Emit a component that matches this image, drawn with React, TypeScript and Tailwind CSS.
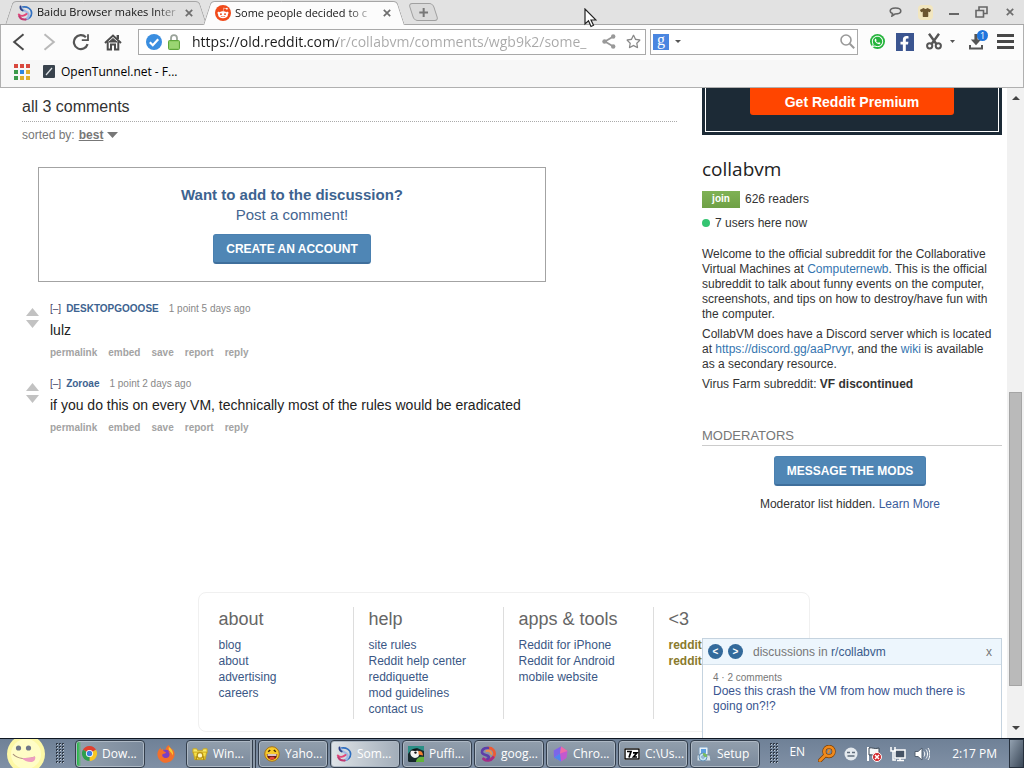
import React from "react";
import { FaRedditAlien, FaFacebookF, FaWhatsapp, FaTshirt, FaRegStar, FaFirefoxBrowser } from "react-icons/fa";

/* ---------- icons ---------- */

function BaiduIcon({ size = 16 }: { size?: number }) {
  return (
    <svg width={size} height={size} viewBox="0 0 16 16" fill="none" strokeLinecap="round" aria-hidden="true">
      <path d="M5.500 2C10 1 14.600 4 14.600 8c0 3.400-2.600 6-6 6.400" stroke="#2f6fc0" strokeWidth="1.700" />
      <path d="M4.500 3c1.800 4 6 2.600 7 6 .6 2.200-.4 4-2.500 5" stroke="#9db9e4" strokeWidth="2.200" />
      <path d="M1.800 9.500c2.200 2.300 5.700 1.200 7.700-.5" stroke="#e2487a" strokeWidth="2" />
      <path d="M2.200 11.200c1.500 2.800 4 3.600 6.600 3.200" stroke="#c23a72" strokeWidth="2" />
      <path d="M3.500 1.500c-.3 1.800.5 3.300 2.200 4" stroke="#2a3f86" strokeWidth="1.800" />
    </svg>
  );
}

function RedditIcon() {
  return (
    <span className="flex size-4 shrink-0 items-center justify-center rounded-full bg-[#f04a1a]">
      <FaRedditAlien size={12} color="#fff" />
    </span>
  );
}

function CloseX({ size = 8 }: { size?: number }) {
  return (
    <svg width={size} height={size} viewBox="0 0 8 8" aria-hidden="true">
      <path d="m.8.8 6.4 6.4M7.2.8.8 7.2" stroke="#6e6e6e" strokeWidth="1.7" />
    </svg>
  );
}

function BackIcon({ flip = false }: { flip?: boolean }) {
  return (
    <svg width="14" height="18" viewBox="0 0 14 18" fill="none" className={flip ? "rotate-180" : ""} aria-hidden="true">
      <path d="M11.5 1.2 2.2 9l9.3 7.8" stroke={flip ? "#b9b9b9" : "#4a4a4a"} strokeWidth="2" />
    </svg>
  );
}

function ReloadIcon() {
  return (
    <svg width="18" height="18" viewBox="0 0 18 18" fill="none" aria-hidden="true">
      <path d="M15.6 11.2A7 7 0 1 1 13.9 4.2" stroke="#555" strokeWidth="2.2" />
      <path d="M16 1.2v6H9.8" stroke="#555" strokeWidth="1.8" />
    </svg>
  );
}

function HomeIcon() {
  return (
    <svg width="18" height="18" viewBox="0 0 18 18" fill="none" stroke="#4d4d4d" aria-hidden="true">
      <path d="M1 10 9 2.500l8 7.500" strokeWidth="2" />
      <path d="M3.700 8.200v8.300H7v-5h4v5h3.300V8.200" strokeWidth="2" />
      <path d="M13.800 2v4" strokeWidth="2.400" />
      <path d="M5 9 9 5.500 13 9z" fill="#4d4d4d" strokeWidth="1" />
    </svg>
  );
}

function VerifiedIcon() {
  return (
    <svg width="16" height="16" viewBox="0 0 16 16" aria-hidden="true">
      <circle cx="8" cy="8" r="8" fill="#3a8ee0" />
      <path d="m3.8 8.2 3 3 5.4-6" fill="none" stroke="#fff" strokeWidth="2.2" />
    </svg>
  );
}

function LockIcon() {
  return (
    <svg width="12" height="16" viewBox="0 0 12 16" aria-hidden="true">
      <path d="M3 8V4.2a3 3 0 0 1 6 0V8" fill="none" stroke="#9aa39a" strokeWidth="1.8" />
      <rect x=".5" y="6.500" width="11" height="9" rx="1" fill="#8dcc63" stroke="#5fa63c" />
      <path d="M1.500 9h9M1.500 11h9M1.500 13h9" stroke="#a7de83" />
    </svg>
  );
}

function ShareIcon() {
  return (
    <svg width="14" height="15" viewBox="0 0 14 15" aria-hidden="true">
      <path d="M11.300 2.500 3 7.500l8.300 5" fill="none" stroke="#999" strokeWidth="1.800" />
      <circle cx="11.200" cy="2.500" r="2.200" fill="#999" />
      <circle cx="2.600" cy="7.500" r="2.300" fill="#999" />
      <circle cx="11.200" cy="12.500" r="2.200" fill="#999" />
    </svg>
  );
}

function ScissorsIcon() {
  return (
    <svg width="16" height="17" viewBox="0 0 16 17" fill="none" stroke="#555" aria-hidden="true">
      <path d="M3 .8 10.400 11M13 .8 5.600 11" strokeWidth="2.400" />
      <circle cx="3.700" cy="12.800" r="2.600" strokeWidth="2" />
      <circle cx="12.300" cy="12.800" r="2.600" strokeWidth="2" />
    </svg>
  );
}

function DownloadIcon() {
  return (
    <svg width="14" height="16" viewBox="0 0 14 16" aria-hidden="true">
      <path d="M7 0v8" stroke="#555" strokeWidth="3.200" />
      <path d="M1.800 5.500h10.400L7 11.200z" fill="#555" />
      <path d="M1 11v3.600h12V11" fill="none" stroke="#555" strokeWidth="2" />
    </svg>
  );
}

function Caret({ color = "#555", width = 6 }: { color?: string; width?: number }) {
  return (
    <svg width={width} height={Math.ceil(width / 2)} viewBox="0 0 6 3" preserveAspectRatio="none" aria-hidden="true">
      <path d="M0 0h6L3 3z" fill={color} />
    </svg>
  );
}

function AppsIcon() {
  const colors = ["#d8483e", "#d8483e", "#d8483e", "#3b9a4a", "#2f86e0", "#dfae2c", "#3b9a4a", "#dfae2c", "#dfae2c"];
  return (
    <svg width="16" height="16" viewBox="0 0 16 16" aria-hidden="true">
      {colors.map((c, i) => (
        <rect key={i} x={(i % 3) * 6} y={Math.floor(i / 3) * 6} width="4" height="4" fill={c} />
      ))}
    </svg>
  );
}

function ChromeIcon() {
  return (
    <svg width="15" height="15" viewBox="0 0 16 16" aria-hidden="true">
      <path d="M8 8 1.070 4A8 8 0 0 1 14.930 4z" fill="#e0402f" />
      <path d="M8 8 14.930 4A8 8 0 0 1 8 16z" fill="#f8c623" />
      <path d="M8 8v8A8 8 0 0 1 1.070 4z" fill="#2e9f4c" />
      <circle cx="8" cy="8" r="3.800" fill="#fff" />
      <circle cx="8" cy="8" r="2.900" fill="#3c7fe0" />
    </svg>
  );
}

function FolderIcon() {
  return (
    <svg width="17" height="15" viewBox="0 0 17 15" aria-hidden="true">
      <path d="M1 2.500h4l1 2h5l1-2h4V7H1z" fill="#f9ea6a" stroke="#c9a51d" />
      <path d="M1.500 6h14l-1.500 8H3z" fill="#f6e14a" stroke="#c9a51d" />
      <circle cx="8.500" cy="9.500" r="3" fill="#fff9c4" stroke="#b9920f" strokeWidth="1.400" />
      <path d="M4.500 14.500v-4M12.500 14.500v-4" stroke="#b08b12" strokeWidth="1.500" />
    </svg>
  );
}

function LaughIcon() {
  return (
    <svg width="16" height="16" viewBox="0 0 16 16" aria-hidden="true">
      <circle cx="8" cy="8" r="7.300" fill="#f7c92a" stroke="#a4721a" />
      <path d="M2.800 8h10.400c0 3.500-2.200 5.700-5.200 5.700S2.800 11.500 2.800 8z" fill="#6a1813" />
      <path d="M3.500 8.200h9v1.500h-9z" fill="#fff" />
      <path d="M5 12c2-1.600 4-1.600 6 0-1.500 2-4.500 2-6 0z" fill="#e8473c" />
      <path d="M4.200 5.800 6.200 4M11.800 5.800 9.800 4" stroke="#3b2706" strokeWidth="1.500" />
    </svg>
  );
}

function PuffinIcon() {
  return (
    <svg width="16" height="16" viewBox="0 0 16 16" aria-hidden="true">
      <rect width="16" height="16" rx="1.500" fill="#17282b" />
      <path d="M0 0h16v5L9 2 3 4 0 8z" fill="#2a8f86" />
      <path d="M8 16c0-4 4-6 8-5v5z" fill="#62b33b" />
      <path d="M3 5c3-3 7-2 8 1s-1 6-4 6-6-4-4-7z" fill="#f3f4f2" />
      <path d="M10.500 5c3-.5 4.500 1.500 4.500 4.500l-4.500-1z" fill="#ef7e31" />
      <path d="M3 4.500c2-2.500 6-2.500 7.500 0L7 5z" fill="#0d1416" />
      <circle cx="7.500" cy="6.600" r="1.200" fill="#111" />
    </svg>
  );
}

function SwirlIcon() {
  return (
    <svg width="16" height="16" viewBox="0 0 16 16" fill="none" strokeLinecap="round" aria-hidden="true">
      <path d="M8.500 2c4 0 6.500 3 6 6.500-.5 2.500-2 4-4 4.500" stroke="#ee5a34" strokeWidth="2.800" />
      <path d="M13 11.500c-2 3.200-6.500 3.800-9.500 1.300" stroke="#a62c86" strokeWidth="2.800" />
      <path d="M8 2C4 1.500 1.500 4 2 6.500 2.500 9 6 8.600 8 9.800c1.500 1 1 2.600-.5 3" stroke="#5d3fa8" strokeWidth="2.600" />
      <path d="M6.500 5c2.500-.5 4.500.7 5 3" stroke="#f08c4a" strokeWidth="2" />
    </svg>
  );
}

function GemIcon() {
  return (
    <svg width="15" height="16" viewBox="0 0 15 16" aria-hidden="true">
      <path d="M8 .5 14.500 5l-1 7L8 15.500 1 11.500.8 4.500z" fill="#c259cf" />
      <path d="M8 .5.8 4.500 1 11.500l6-4z" fill="#7b66e8" />
      <path d="m8 .5 6.500 4.500-7.500 2.500z" fill="#f06aa7" />
      <path d="M1 11.500 8 15.500l-1-8z" fill="#4e86ee" />
    </svg>
  );
}

function SevenZipIcon() {
  return (
    <svg width="16" height="12" viewBox="0 0 16 12" fill="none" aria-hidden="true">
      <rect width="16" height="12" fill="#fff" />
      <rect x="1" y="1" width="14" height="10" fill="#fff" stroke="#000" strokeWidth="1.400" />
      <path d="M3 3.500h4L5 9.500M9 4.800h4L9.500 9H13" stroke="#000" strokeWidth="1.700" />
    </svg>
  );
}

function SetupIcon() {
  return (
    <svg width="16" height="16" viewBox="0 0 16 16" aria-hidden="true">
      <rect x="3" y="1" width="9" height="8" rx="1" fill="#e8f1f8" stroke="#7f9cb8" />
      <rect x="5" y="3" width="5" height="4" fill="#5c9fe0" />
      <path d="M1 9h13l1 6H1z" fill="#d8e2ea" stroke="#7c8ea0" />
      <circle cx="7" cy="11" r="4" fill="#c2e2f2" stroke="#6793b8" />
      <path d="M7 11V7a4 4 0 0 1 4 4z" fill="#79bf5e" />
      <circle cx="7" cy="11" r="1.200" fill="#fff" stroke="#6793b8" />
    </svg>
  );
}

function StartFace() {
  return (
    <svg width="40" height="40" viewBox="0 0 40 40" aria-hidden="true">
      <circle cx="20" cy="20" r="19" fill="#fdf8a6" />
      <circle cx="20" cy="20" r="15" fill="#fffdc6" />
      <circle cx="12.500" cy="14" r="2.600" fill="#6f7789" />
      <circle cx="22.500" cy="14" r="2.600" fill="#6f7789" />
      <path d="M7 20c4 5 14 6 22 3" fill="none" stroke="#a88f7a" strokeWidth="1.200" />
      <path d="M16 24c4 0 9 0 13-1.500 1 3-1 5.500-4 5.500-4 0-7-1.500-9-4z" fill="#ee9dc0" />
    </svg>
  );
}

function Grip() {
  return (
    <svg width="9" height="22" viewBox="0 0 9 22" aria-hidden="true">
      {Array.from({ length: 21 }, (_, i) => (
        <g key={i}>
          <rect x={(i % 3) * 3} y={Math.floor(i / 3) * 3} width="2" height="2" fill="#2f3a48" />
          <rect x={(i % 3) * 3 + 1} y={Math.floor(i / 3) * 3 + 1} width="1" height="1" fill="#c3ccd6" />
        </g>
      ))}
    </svg>
  );
}

function Arrows() {
  return (
    <div className="flex w-3.5 shrink-0 flex-col gap-1 pt-2">
      <button aria-label="upvote">
        <svg width="13" height="8" viewBox="0 0 13 8" className="block"><path d="M0 8 6.500 0 13 8z" fill="#c2c2c2" /></svg>
      </button>
      <button aria-label="downvote">
        <svg width="13" height="8" viewBox="0 0 13 8" className="block"><path d="M0 0h13L6.500 8z" fill="#c2c2c2" /></svg>
      </button>
    </div>
  );
}

/* ---------- browser chrome ---------- */

function Tab({ active = false, icon, title }: { active?: boolean; icon: React.ReactNode; title: string }) {
  const fill = active ? "bg-[#fcfcfc]" : "bg-[#dfdfdf]";
  return (
    <div className={`relative mr-1 flex w-[194px] shrink-0 items-center ${active ? "-mb-px h-6" : "h-[23px]"}`}>
      <span className={`absolute inset-y-0 left-0 w-3/5 -skew-x-[18deg] rounded-tl border-t border-l border-[#a6a6a6] ${fill}`} />
      <span className={`absolute inset-y-0 right-0 w-3/5 skew-x-[18deg] rounded-tr border-t border-r border-[#a6a6a6] ${fill}`} />
      <div className="relative flex w-full items-center pr-2.5 pl-2">
        {icon}
        <span className="ml-1 bg-[linear-gradient(90deg,#111_84%,#aaa_100%)] bg-clip-text text-[11px] whitespace-nowrap text-transparent">
          {title}
        </span>
        <button aria-label="Close tab" className="ml-auto"><CloseX /></button>
      </div>
    </div>
  );
}

function TabStrip() {
  return (
    <header className="flex h-[25px] items-end border-b border-[#a6a6a6] bg-[#e2e2e2] pl-[9px]">
      <Tab icon={<BaiduIcon />} title="Baidu Browser makes Inter" />
      <Tab active icon={<RedditIcon />} title="Some people decided to c" />
      <button aria-label="New tab" className="mb-[3px] ml-1.5 flex h-[18px] w-[25px] skew-x-[18deg] items-center justify-center rounded-sm border border-[#a0a0a0] bg-[#dadada]">
        <svg width="9" height="9" viewBox="0 0 9 9" className="-skew-x-[18deg]"><path d="M4.500 0v9M0 4.500h9" stroke="#777" strokeWidth="2" /></svg>
      </button>
      <div className="ml-auto flex h-full items-center gap-4 pr-2.5">
        <button aria-label="Feedback">
          <svg width="13" height="10" viewBox="0 0 13 10" fill="none"><path d="M6.500 1C3 1 1.200 2.300 1.200 4c0 1.300 1 2.200 2.300 2.600L3 9l3-2c3.500 0 5.800-1 5.800-3S9.800 1 6.500 1z" stroke="#666" strokeWidth="1.600" /></svg>
        </button>
        <button aria-label="Skins" className="rounded-sm bg-[#f2e6bf] p-0.5"><FaTshirt size={11} color="#6b5530" /></button>
        <button aria-label="Minimize" className="pt-1"><span className="block h-0.5 w-2.5 bg-[#666]" /></button>
        <button aria-label="Restore">
          <svg width="13" height="12" viewBox="0 0 13 12" fill="none" stroke="#666" strokeWidth="1.600"><path d="M1 4.500h7.500V11H1zM4 4V1h8v6.500H9" /></svg>
        </button>
        <button aria-label="Close" className="pl-0.5"><CloseX size={8} /></button>
      </div>
    </header>
  );
}

function Toolbar() {
  return (
    <div className="flex h-[35px] items-center border-x border-[#b0b0b0] bg-[#fcfcfc] pr-[9px] pb-0.5 pl-[11px]">
      <nav className="flex w-[126px] shrink-0 items-center gap-4">
        <button aria-label="Back"><BackIcon /></button>
        <button aria-label="Forward"><BackIcon flip /></button>
        <button aria-label="Reload"><ReloadIcon /></button>
        <button aria-label="Home" className="-ml-0.5"><HomeIcon /></button>
      </nav>
      <div className="flex h-[26px] min-w-0 flex-1 items-center border border-[#a9a9a9] bg-white pr-1 pl-[7px]">
        <VerifiedIcon />
        <span className="ml-1.5"><LockIcon /></span>
        <input
          aria-label="Address"
          readOnly
          value="https://old.reddit.com/r/collabvm/comments/wgb9k2/some_"
          className="ml-3 min-w-0 flex-1 bg-[linear-gradient(90deg,#1a1a1a_146px,#a8a8a8_146px)] bg-clip-text text-sm text-transparent outline-none"
        />
        <button aria-label="Share" className="ml-1"><ShareIcon /></button>
        <button aria-label="Bookmark this page" className="ml-2.5"><FaRegStar size={15} color="#888" /></button>
      </div>
      <div className="ml-1 flex h-[26px] w-[208px] shrink-0 items-center border border-[#a9a9a9] bg-white px-0.5">
        <button aria-label="Search engine" className="flex items-center gap-1.5">
          <span className="flex size-4 items-center justify-center bg-[#4a86e0] pb-1 font-['Liberation_Serif',serif] text-base leading-4 text-white">g</span>
          <Caret />
        </button>
        <input aria-label="Search" className="min-w-0 flex-1 outline-none" />
        <svg width="15" height="15" viewBox="0 0 15 15" fill="none" stroke="#999" aria-hidden="true"><circle cx="6" cy="6" r="5" strokeWidth="1.600" /><path d="m9.800 9.800 4.400 4.400" strokeWidth="2" /></svg>
      </div>
      <div className="flex shrink-0 items-center pl-3">
        <button aria-label="WhatsApp" className="flex size-[15px] items-center justify-center rounded-full bg-[#25b43c]"><FaWhatsapp size={13} color="#fff" /></button>
        <button aria-label="Facebook" className="ml-[11px] flex size-[18px] items-end justify-end bg-[#3b5590] pr-0.5"><FaFacebookF size={15} color="#fff" /></button>
        <button aria-label="Clip" className="ml-3 flex items-center gap-2"><ScissorsIcon /><Caret width={5} /></button>
        <button aria-label="Downloads" className="relative ml-3.5">
          <DownloadIcon />
          <span className="absolute -top-1 left-2 flex size-[11px] items-center justify-center rounded-full bg-[#1f75dd] text-[9px] leading-none text-white">1</span>
        </button>
        <button aria-label="Menu" className="ml-3.5 flex flex-col gap-[3px]">
          <span className="h-[3px] w-[17px] bg-[#484848]" />
          <span className="h-[3px] w-[17px] bg-[#484848]" />
          <span className="h-[3px] w-[17px] bg-[#484848]" />
        </button>
      </div>
    </div>
  );
}

function BookmarkBar() {
  return (
    <div className="flex h-7 items-center gap-[13px] border-x border-b border-[#b0b0b0] bg-[#f7f7f7] pb-1 pl-[13px]">
      <button aria-label="Apps"><AppsIcon /></button>
      <a href="#opentunnel" className="flex items-center gap-1.5 text-xs text-black">
        <svg width="12" height="13" viewBox="0 0 12 13" aria-hidden="true"><rect width="12" height="13" rx="1" fill="#38424c" /><path d="m3 10 6-7" stroke="#e0e4e8" strokeWidth="1.200" /></svg>
        OpenTunnel.net - F...
      </a>
    </div>
  );
}

/* ---------- page ---------- */

const actions = ["permalink", "embed", "save", "report", "reply"];

function Comment({ author, age, text }: { author: string; age: string; text: string }) {
  return (
    <article className="flex gap-2.5 pl-1">
      <Arrows />
      <div className="h-[75px]">
        <p className="flex h-4 items-center text-[10px] text-[#888]">
          <button className="text-[#446]">[–]</button>
          <a href="#author" className="ml-[5px] font-bold text-[#3d6390]">{author}</a>
          <span className="ml-2.5">1 point {age}</span>
        </p>
        <p className="mt-1 text-sm leading-5 text-[#222]">{text}</p>
        <ul className="mt-[5px] flex gap-[11px] text-[10px] leading-4 font-bold text-[#a3a3a3]">
          {actions.map((a) => (
            <li key={a}><a href="#action">{a}</a></li>
          ))}
        </ul>
      </div>
    </article>
  );
}

function BlueButton({ children }: { children: React.ReactNode }) {
  return (
    <button className="h-[30px] rounded-[3px] border border-b-2 border-[#4a80b0] border-b-[#3f6f9c] bg-[#4f86b5] px-3 text-xs font-bold text-white">
      {children}
    </button>
  );
}

function Comments() {
  return (
    <main className="min-w-0 flex-1 pt-[9px] pl-[22px]">
      <h2 className="border-b border-dotted border-[#aaa] pb-1 text-base leading-5 text-[#333]">all 3 comments</h2>
      <div className="mt-[5px] flex h-4 items-center text-xs text-[#777]">
        sorted by:
        <button className="ml-1 flex items-center gap-1 font-bold"><span className="underline">best</span><Caret width={11} color="#777" /></button>
      </div>
      <section className="mt-6 ml-4 flex h-[115px] max-w-[508px] flex-col items-center border border-[#a3a3a3] pt-[17px] text-[15px] leading-5 text-[#446590]">
        <h3 className="font-bold text-[#3d6390]">Want to add to the discussion?</h3>
        <p className="mb-[9px]">Post a comment!</p>
        <BlueButton>CREATE AN ACCOUNT</BlueButton>
      </section>
      <div className="mt-[18px]">
        <Comment author="DESKTOPGOOOSE" age="5 days ago" text="lulz" />
        <Comment author="Zoroae" age="2 days ago" text="if you do this on every VM, technically most of the rules would be eradicated" />
      </div>
    </main>
  );
}

function Sidebar() {
  return (
    <aside className="w-[300px] shrink-0 text-xs text-[#333]">
      <div className="bg-[#1c2a36] px-[3px] pb-[3px]">
        <div className="flex h-11 justify-center border-x border-b border-white">
          <button className="h-[27px] w-[204px] rounded-b-[3px] bg-[#ff4500] text-sm font-bold text-white">Get Reddit Premium</button>
        </div>
      </div>
      <h1 className="mt-5 font-['Open_Sans','Noto_Sans',sans-serif] text-[19px] leading-7 text-[#222]">collabvm</h1>
      <p className="mt-2 flex h-4 items-center gap-[5px]">
        <button className="h-[17px] w-[38px] bg-gradient-to-b from-[#7fb255] to-[#6fa046] text-[10px] font-bold text-white">join</button>
        626 readers
      </p>
      <p className="mt-2 flex h-4 items-center gap-[5px]"><span className="size-2 rounded-full bg-[#34c471]" />7 users here now</p>
      <div className="mt-4 space-y-[5px] pr-2 leading-[15px]">
        <p>
          Welcome to the official subreddit for the Collaborative Virtual Machines at <a href="#computernewb" className="text-[#3475b0]">Computernewb</a>. This is the official
          subreddit to talk about funny events on the computer, screenshots, and tips on how to destroy/have fun with the computer.
        </p>
        <p>
          CollabVM does have a Discord server which is located at <a href="#discord" className="text-[#3475b0]">https://discord.gg/aaPrvyr</a>, and the{" "}
          <a href="#wiki" className="text-[#3475b0]">wiki</a> is available as a secondary resource.
        </p>
        <p>Virus Farm subreddit: <strong>VF discontinued</strong></p>
      </div>
      <h2 className="mt-[35px] mb-2.5 border-b border-[#ccc] text-[13px] leading-[18px] text-[#777]">MODERATORS</h2>
      <div className="flex flex-col items-center gap-2.5 pr-1">
        <BlueButton>MESSAGE THE MODS</BlueButton>
        <p>Moderator list hidden. <a href="#more" className="text-[#3a5c9c]">Learn More</a></p>
      </div>
    </aside>
  );
}

const columns = [
  { title: "about", links: ["blog", "about", "advertising", "careers"] },
  { title: "help", links: ["site rules", "Reddit help center", "reddiquette", "mod guidelines", "contact us"] },
  { title: "apps & tools", links: ["Reddit for iPhone", "Reddit for Android", "mobile website"] },
  { title: "<3", links: ["reddit premium", "reddit gifts"] },
];

function Footer() {
  return (
    <footer className="mx-auto mt-20 flex w-fit rounded-lg border border-[#f0f0f0] px-[5px] pt-3.5 pb-3">
      {columns.map((c, i) => (
        <div key={c.title} className={`h-28 w-[150px] pl-[15px] ${i < 3 ? "border-r border-[#ddd]" : ""}`}>
          <h3 className="text-lg leading-6 text-[#666]">{c.title}</h3>
          <ul className={`mt-1.5 text-xs leading-4 ${i === 3 ? "font-bold text-[#8a7a2c]" : "text-[#3a5785]"}`}>
            {c.links.map((l) => (
              <li key={l}><a href="#footer">{l}</a></li>
            ))}
          </ul>
        </div>
      ))}
    </footer>
  );
}

function Discussions() {
  return (
    <section className="absolute right-[5px] bottom-0 h-[100px] w-[300px] border border-b-0 border-[#c5d3df] bg-white">
      <div className="flex h-[26px] items-center border-b border-[#d3e0ea] bg-[#edf6fd] px-[5px] text-xs text-[#777]">
        <button aria-label="Previous" className="flex size-[15px] items-center justify-center rounded-full bg-[#336a9b] text-[10px] font-bold text-white">&lt;</button>
        <button aria-label="Next" className="ml-[5px] flex size-[15px] items-center justify-center rounded-full bg-[#336a9b] text-[10px] font-bold text-white">&gt;</button>
        <span className="ml-2.5">discussions in <a href="#sub" className="text-[#3a5c8c]">r/collabvm</a></span>
        <button aria-label="Close discussions" className="mr-1 ml-auto">x</button>
      </div>
      <div className="px-2.5 pt-1.5">
        <p className="text-[10px] leading-[13px] text-[#777]">4 · 2 comments</p>
        <a href="#discussion" className="block text-xs leading-[15px] text-[#3a5590]">Does this crash the VM from how much there is going on?!?</a>
      </div>
    </section>
  );
}

function Scrollbar() {
  return (
    <div className="flex w-[17px] shrink-0 flex-col items-center bg-[#f1f1f1] py-2">
      <span className="rotate-180"><Caret width={8} color="#444" /></span>
      <div className="flex-[291]" />
      <div className="w-[13px] flex-[291] border border-[#a5a5a5] bg-[#bababa]" />
      <div className="flex-[40]" />
      <Caret width={8} color="#444" />
    </div>
  );
}

/* ---------- taskbar ---------- */

function Task({ icon, label, look = "bg-gradient-to-b from-[#929fad] to-[#7b8a9c]" }: { icon: React.ReactNode; label: string; look?: string }) {
  return (
    <button className={`flex h-7 w-[70px] shrink-0 items-center gap-[5px] overflow-hidden rounded-sm border border-[#333e4c] pl-[5px] whitespace-nowrap shadow-[inset_0_0_0_1px_#adb8c4] ${look}`}>
      <span className="flex w-4 shrink-0 justify-center">{icon}</span>
      {label}
    </button>
  );
}

function Taskbar() {
  return (
    <footer className="flex h-[30px] shrink-0 items-center gap-0.5 overflow-hidden border-t border-[#0e1622] bg-gradient-to-b from-[#6f8197] to-[#8090a5] text-xs text-white">
      <button aria-label="Start" className="ml-1.5 flex h-[30px] w-10 shrink-0 items-center"><StartFace /></button>
      <span className="mx-2 shrink-0"><Grip /></span>
      <Task icon={<ChromeIcon />} label="Dow..." look="bg-gradient-to-r from-[#2bb84e] from-3% via-[#929fad] via-8% to-[#7b8a9c]" />
      <button aria-label="Firefox" className="flex w-[37px] shrink-0 justify-center">
        <svg width="18" height="18" viewBox="0 0 18 18">
          <circle cx="9" cy="9.500" r="5" fill="#7a3fc4" />
          <FaFirefoxBrowser size={18} color="#f2702c" />
          <path d="M12 2c3 2 4.500 5 4 8.500-.8-2-2-3-3.500-4.500C11.500 4.500 11.500 3 12 2z" fill="#fbc931" />
        </svg>
      </button>
      <div className="flex shrink-0">
        <div className="w-16 overflow-hidden"><Task icon={<FolderIcon />} label="Win..." /></div>
        <span className="h-7 w-[3px] border-r border-[#333e4c] bg-[#9aa6b3]" />
        <span className="h-7 w-[3px] border-r border-[#333e4c] bg-[#8a98a8]" />
      </div>
      <Task icon={<LaughIcon />} label="Yaho..." />
      <Task icon={<BaiduIcon />} label="Som..." look="bg-gradient-to-r from-[#dfe4e8] to-[#a2adb9]" />
      <Task icon={<PuffinIcon />} label="Puffi..." />
      <Task icon={<SwirlIcon />} label="goog..." />
      <Task icon={<GemIcon />} label="Chro..." />
      <Task icon={<SevenZipIcon />} label="C:\Us..." />
      <Task icon={<SetupIcon />} label="Setup" />
      <div className="ml-auto flex h-full shrink-0 items-center">
        <Grip />
        <span className="mb-1 ml-2.5">EN</span>
        <div className="ml-[13px] flex items-center gap-2">
          <svg width="18" height="17" viewBox="0 0 18 17" fill="none" aria-hidden="true">
            <path d="M7.500 10 2 15.500" stroke="#7a3c00" strokeWidth="4" strokeLinecap="round" />
            <circle cx="11" cy="6.500" r="4.700" stroke="#7a3c00" strokeWidth="4" />
            <path d="M7.500 10 2 15.500" stroke="#f08a1d" strokeWidth="2.800" strokeLinecap="round" />
            <circle cx="11" cy="6.500" r="4.700" stroke="#f08a1d" strokeWidth="2.800" />
            <path d="M11.500 4.500 10 8" stroke="#f08a1d" strokeWidth="2" />
          </svg>
          <svg width="14" height="14" viewBox="0 0 14 14" aria-hidden="true"><circle cx="7" cy="7" r="6.500" fill="#e4e9ee" /><path d="M3 5.500h3M8 5.500h3M3.500 9h7" stroke="#5f6d7c" strokeWidth="1.500" /></svg>
          <svg width="16" height="16" viewBox="0 0 16 16" aria-hidden="true"><path d="M2 1v14" stroke="#fff" strokeWidth="2" /><path d="M3 2c3-1 5 1.500 10 0v7c-4 1.500-7-1-10 0z" fill="#f4f6f8" stroke="#3a4654" /><circle cx="11" cy="11" r="4.500" fill="#d3262c" stroke="#fff" /><path d="m9 9 4 4m0-4-4 4" stroke="#fff" strokeWidth="1.500" /></svg>
          <svg width="16" height="16" viewBox="0 0 16 16" fill="none" aria-hidden="true"><rect x="5" y="4" width="10" height="8" fill="#465365" stroke="#fff" strokeWidth="1.500" /><path d="M7 14.500h7M10 12v2M1 1v4h4V1M3 5v9h3" stroke="#fff" strokeWidth="1.500" /></svg>
          <svg width="16" height="16" viewBox="0 0 16 16" fill="none" aria-hidden="true"><path d="M1 5.500h3L8 2v12l-4-3.500H1z" fill="#fff" stroke="#536071" /><path d="M10 5.500c1 1.500 1 3.500 0 5M12 3.500c2 2.500 2 6.500 0 9M14 2c2.500 3.500 2.500 8.500 0 12" stroke="#fff" /></svg>
        </div>
        <time className="ml-[22px]">2:17 PM</time>
        <button aria-label="Show desktop" className="ml-3 h-full w-[15px] border border-[#26303d] bg-gradient-to-br from-[#93a1b0] to-[#3b4858]" />
      </div>
    </footer>
  );
}

export default function App() {
  return (
    <div className="relative flex h-screen flex-col overflow-hidden bg-white font-['Open_Sans','Noto_Sans',sans-serif]">
      <TabStrip />
      <Toolbar />
      <BookmarkBar />
      <div className="flex min-h-0 flex-1 font-['Liberation_Sans',Arial,sans-serif]">
        <div className="relative min-w-0 flex-1 overflow-hidden">
          <div className="flex gap-[25px] pr-[5px]">
            <Comments />
            <Sidebar />
          </div>
          <Footer />
          <Discussions />
        </div>
        <Scrollbar />
      </div>
      <Taskbar />
      <svg width="13" height="20" viewBox="0 0 13 20" className="pointer-events-none absolute top-2 left-[57%]" aria-hidden="true">
        <path d="M1 1v15l3.500-3.200L7 18.500l2.500-1.200L7 12h5z" fill="#fff" stroke="#222" strokeWidth="1.200" />
      </svg>
    </div>
  );
}
